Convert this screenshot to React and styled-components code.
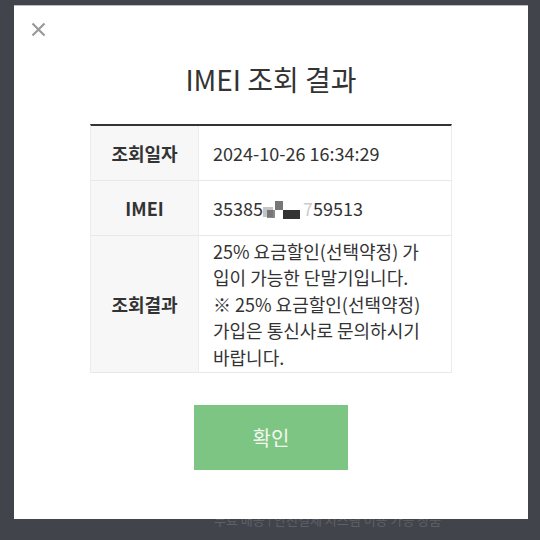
import React from "react";
import styled, { createGlobalStyle } from "styled-components";

const GlobalStyle = createGlobalStyle`
  html, body {
    margin: 0;
    padding: 0;
    background: #42444c;
    font-family: "Noto Sans CJK KR", "Noto Sans", sans-serif;
  }
`;

const Page = styled.div`
  width: 540px;
  height: 540px;
  padding: 5px 0 0 14px;
  box-sizing: border-box;
  overflow: hidden;
`;

const Modal = styled.div`
  width: 514px;
  height: 514px;
  box-sizing: border-box;
  background: #fff;
  border-top: 1px solid #b9bcc4;
  padding-top: 16px;
  display: flex;
  flex-direction: column;
  align-items: center;
`;

const CloseRow = styled.div`
  align-self: stretch;
  padding-left: 17px;
  height: 15px;
  display: flex;
`;

const CloseButton = styled.button`
  border: 0;
  padding: 0;
  background: none;
  width: 15px;
  height: 15px;
  display: flex;
  cursor: pointer;
`;

const Title = styled.h1`
  margin: 23px 0 0;
  font-size: 28px;
  line-height: 38px;
  font-weight: 400;
  color: #333;
`;

const Table = styled.div`
  margin-top: 26px;
  width: 360px;
  display: grid;
  grid-template-columns: 108px 1fr;
  border-top: 2px solid #333;
  border-left: 1px solid #ececec;
  border-right: 1px solid #ececec;
`;

const Label = styled.div`
  height: ${(p) => p.h}px;
  background: #f7f7f7;
  border-bottom: 1px solid #e8e8e8;
  border-right: 1px solid #ececec;
  display: flex;
  align-items: center;
  justify-content: center;
  font-size: 18px;
  font-weight: 700;
  color: #333;
`;

const Value = styled.div`
  height: ${(p) => p.h}px;
  border-bottom: 1px solid #e8e8e8;
  padding: 0 18px 0 14px;
  display: flex;
  align-items: center;
  font-size: 18px;
  line-height: 26.5px;
  color: #333;
  word-break: break-all;
`;

const Mosaic = styled.svg`
  width: 42px;
  height: 22px;
  margin: 0 -2px 0 0;
  vertical-align: -4px;
`;

const Faint = styled.span`
  color: #ccc;
`;

const ConfirmButton = styled.button`
  margin-top: 32px;
  width: 154px;
  height: 65px;
  border: 0;
  background: #7dc582;
  color: #f2f7f0;
  font-family: inherit;
  font-size: 20px;
  cursor: pointer;
`;

const Behind = styled.div`
  height: 8px;
  overflow: hidden;
  margin-left: 200px;
  font-size: 13px;
  color: #5e6067;
  line-height: 13px;
  & span {
    display: block;
    margin-top: -6px;
  }
`;

export default function App() {
  return (
    <>
      <GlobalStyle />
      <Page>
        <Modal>
          <CloseRow>
            <CloseButton aria-label="close">
              <svg width="15" height="15" viewBox="0 0 15 15">
                <path d="M1.5 1.5 L13.5 13.5 M13.5 1.5 L1.5 13.5" stroke="#999" strokeWidth="2.2" />
              </svg>
            </CloseButton>
          </CloseRow>
          <Title>IMEI 조회 결과</Title>
          <Table>
            <Label h={54}>조회일자</Label>
            <Value h={54}>2024-10-26 16:34:29</Value>
            <Label h={54}>IMEI</Label>
            <Value h={54}>
              <span>
                35385
                <Mosaic viewBox="0 0 42 22">
                  <rect x="0" y="9" width="10" height="10" fill="#8a8a8a" opacity="0.5" />
                  <rect x="4" y="12" width="8" height="8" fill="#555" opacity="0.7" />
                  <rect x="12" y="3" width="8" height="9" fill="#777" />
                  <rect x="20" y="12" width="17" height="9" fill="#333" />
                </Mosaic>
                <Faint>7</Faint>59513
              </span>
            </Value>
            <Label h={136}>조회결과</Label>
            <Value h={136}>
              25% 요금할인(선택약정) 가입이 가능한 단말기입니다.
              <br />
              ※ 25% 요금할인(선택약정) 가입은 통신사로 문의하시기 바랍니다.
            </Value>
          </Table>
          <ConfirmButton>확인</ConfirmButton>
        </Modal>
        <Behind>
          <span>무료 배송 | 안전결제 시스템 이용 가능 상품</span>
        </Behind>
      </Page>
    </>
  );
}
